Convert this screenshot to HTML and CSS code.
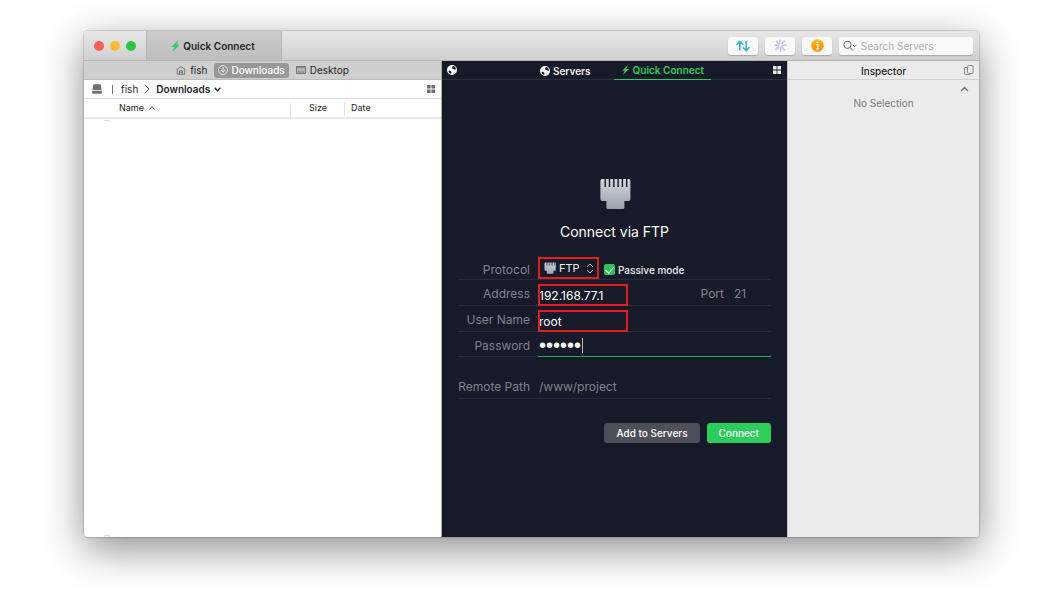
FILE: index.html
```html
<!DOCTYPE html>
<html lang="en">
<head>
<meta charset="utf-8">
<title>Quick Connect</title>
<link rel="stylesheet" href="styles.css">
</head>
<body>
<svg class="defs" aria-hidden="true">
  <defs>
    <linearGradient id="metal" x1="0" y1="0" x2="0" y2="1"><stop offset="0" stop-color="#d3d5d9"/><stop offset="1" stop-color="#98a2ab"/></linearGradient>
    <linearGradient id="amber" x1="0" y1="0" x2="0" y2="1"><stop offset="0" stop-color="#ffb800"/><stop offset="1" stop-color="#ff8a0c"/></linearGradient>
    <symbol id="bolt" viewBox="0 0 9 12"><path d="M7.600 0 .4 6.900h3L1.300 12 8.600 4.800H5.400z" fill="currentColor"/></symbol>
    <symbol id="plug" viewBox="0 0 32 32"><path d="M2.500 1h3v8h1.400V1h2.900v8h1.400V1h2.900v8h1.400V1h2.900v8h1.400V1h2.900v8h1.400V1h2.900v8h1.400V1h1.500q1.500 0 1.500 2v18q0 2-2 2h-4v6.500q0 1.500-1.500 1.500h-15q-1.500 0-1.500-1.500V23h-4q-2 0-2-2V3q0-2 2-2z" fill="url(#metal)"/></symbol>
    <symbol id="grid" viewBox="0 0 8 8"><path d="M0 0h3.600v3.600H0zM4.400 0H8v3.600H4.400zM0 4.400h3.600V8H0zM4.400 4.400H8V8H4.400z" fill="currentColor"/></symbol>
    <symbol id="globe" viewBox="0 0 10 10"><circle cx="5" cy="5" r="5" fill="#fff"/><path d="M5.300 1.300 7 1.100 8.600 2.700 8.900 4.400 7.700 4.800 6.900 3.900 5.700 4 5.200 3zM1.500 5.700 3.200 5.700 4.600 6.900 4.200 8.700 3.200 8.600 2 7.400z" fill="#171a28"/></symbol>
  </defs>
</svg>
<div class="window">
  <header class="titlebar">
    <div class="lights">
      <button class="light red" aria-label="Close"></button>
      <button class="light yellow" aria-label="Minimize"></button>
      <button class="light green" aria-label="Zoom"></button>
    </div>
    <div class="window-tab"><svg class="bolt"><use href="#bolt"/></svg>Quick Connect</div>
    <div class="tools">
      <button class="tool" aria-label="Transfers"><svg width="16" height="12" viewBox="0 0 16 12" fill="none" stroke="#31b2d2" stroke-width="1.600"><path d="M4.800 10.500V1.500M1.500 4.700l3.300-3.400 3.300 3.400M11.200 1v9.500M7.900 7.300l3.300 3.400 3.300-3.400"/></svg></button>
      <button class="tool" aria-label="Activity"><svg width="13" height="13" viewBox="0 0 14 14" fill="none" stroke="#cabff0" stroke-width="1.700" stroke-linecap="round"><path d="M6 5 6.500 1M8.200 5l3-2.700M9 7l4-.5M8.500 8.700l2.700 3M7 9v4M5.200 8.700l-3 2.500M5 7 1 6.700M5.200 5.300 2.700 2.500"/></svg></button>
      <button class="tool" aria-label="Info"><svg width="13" height="13" viewBox="0 0 13 13"><circle cx="6.500" cy="6.500" r="6.300" fill="url(#amber)"/><circle cx="6.500" cy="3.500" r="1" fill="#fff"/><path d="M5.200 5.700h1.500v3.800M5 9.800h3.200" fill="none" stroke="#fff" stroke-width="1.200"/></svg></button>
      <label class="search"><svg width="14" height="12" viewBox="0 0 14 12" fill="none" stroke="#6c6c6c"><circle cx="4.500" cy="4.800" r="3.600"/><path d="m7.200 7.600 2.600 2.900M10 5l1.700 1.400L13.500 5"/></svg><input type="search" placeholder="Search Servers" aria-label="Search Servers"></label>
    </div>
  </header>
  <main class="panes">
    <section class="files">
      <nav class="places">
        <a class="place" href="#fish"><svg width="10" height="9" viewBox="0 0 10 9" fill="none" stroke="#777"><path d="M.5 3.600 5 .7l4.500 2.900M1.300 3.500v4.800h7.400V3.500M3.500 8V4.800h3V8M3.500 6.300h3"/></svg>fish</a>
        <a class="place active" href="#downloads"><svg width="10" height="10" viewBox="0 0 10 10" fill="none" stroke="#e4e4e4"><circle cx="5" cy="5" r="4.500"/><path d="M5 2v5M3 5l2 2.200L7 5"/></svg>Downloads</a>
        <a class="place" href="#desktop"><svg width="10" height="8" viewBox="0 0 10 8"><path d="M.5.5h9v7h-9z" fill="#b4b4b4" stroke="#777"/><path d="M1 1.500h8" stroke="#888"/><path d="M2 6h1.500M4.200 6h1.500M6.500 6H8" stroke="#666"/></svg>Desktop</a>
      </nav>
      <div class="path">
        <svg width="10" height="10" viewBox="0 0 10 10"><path d="M2 .3h6q.7 0 .8.700L9.600 6.200H.4L1.200 1q.1-.7.800-.7zM.2 7h9.600v2q0 .7-.7.700H.9Q.2 9.700.2 9z" fill="#707070"/></svg>
        <span class="bar"></span>
        <span>fish</span>
        <svg width="6" height="10" viewBox="0 0 6 10" fill="none" stroke="#666"><path d="m1 1 4 4-4 4"/></svg>
        <button class="folder">Downloads<svg width="7" height="5" viewBox="0 0 7 5" fill="none" stroke="#222" stroke-width="1.300"><path d="m.7.8 2.800 3L6.300.8"/></svg></button>
        <button class="view-button" aria-label="View options"><svg class="grid"><use href="#grid"/></svg></button>
      </div>
      <table class="listing">
        <thead><tr><th class="col-name">Name <svg width="6" height="4" viewBox="0 0 6 4" fill="none" stroke="#666"><path d="m.5 3.500 2.500-3 2.500 3"/></svg></th><th class="col-size">Size</th><th>Date</th></tr></thead>
      </table>
      <div class="rows"><span class="row-edge"></span><span class="row-edge corner"></span></div>
    </section>
    <section class="remote">
      <nav class="tabs">
        <button class="tab-icon" aria-label="Servers menu"><svg class="globe"><use href="#globe"/></svg></button>
        <div class="tab-group">
          <a class="tab" href="#servers"><svg class="globe"><use href="#globe"/></svg>Servers</a>
          <a class="tab current" href="#quick"><svg class="bolt small"><use href="#bolt"/></svg>Quick Connect</a>
        </div>
        <button class="tab-icon" aria-label="View options"><svg class="grid"><use href="#grid"/></svg></button>
      </nav>
      <form class="connect">
        <svg class="plug"><use href="#plug"/></svg>
        <h1>Connect via FTP</h1>
        <div class="field first">
          <label for="protocol">Protocol</label>
          <div class="select marked"><svg class="plug-small"><use href="#plug"/></svg><select id="protocol"><option>FTP</option></select><svg class="stepper" width="8" height="11" viewBox="0 0 8 11" fill="none" stroke="#bbb"><path d="M1 4l3-3 3 3M1 7l3 3 3-3"/></svg></div>
          <label class="passive"><input type="checkbox" checked>Passive mode</label>
        </div>
        <div class="field">
          <label for="address">Address</label>
          <input class="marked text" id="address" type="text" value="192.168.77.1">
          <label class="port-label" for="port">Port</label>
          <input class="port" id="port" type="text" placeholder="21">
        </div>
        <div class="field">
          <label for="user">User Name</label>
          <input class="marked text" id="user" type="text" value="root">
        </div>
        <div class="field last">
          <label for="password">Password</label>
          <div class="focused"><input id="password" type="password" value="secret"><span class="caret"></span></div>
        </div>
        <div class="field remote-path">
          <label for="path">Remote Path</label>
          <input class="wide" id="path" type="text" placeholder="/www/project">
        </div>
        <div class="actions"><button type="button" class="secondary">Add to Servers</button><button type="button" class="primary">Connect</button></div>
      </form>
    </section>
    <aside class="inspector">
      <div class="inspector-head"><h2>Inspector</h2><button aria-label="Copy"><svg width="10" height="11" viewBox="0 0 10 11" fill="none" stroke="#888"><rect x="3.500" y=".5" width="5.500" height="8" rx="1"/><path d="M3 2.500H1.500q-1 0-1 1v5q0 1 1 1h4q1 0 1-1"/></svg></button></div>
      <button class="collapse" aria-label="Collapse"><svg width="9" height="6" viewBox="0 0 9 6" fill="none" stroke="#777" stroke-width="1.300"><path d="m1 5 3.500-3.500L8 5"/></svg></button>
      <p>No Selection</p>
    </aside>
  </main>
</div>
</body>
</html>
```
FILE: styles.css
```css
* { box-sizing: border-box; }
body {
  margin: 0;
  min-height: 100vh;
  padding: 31px 85px 60px 84px;
  display: flex;
  background: #fff;
  color: #242424;
  font: 10px/14px Inter, "Liberation Sans", sans-serif;
}
button, input, select { font: inherit; color: inherit; border: 0; padding: 0; margin: 0; background: none; min-width: 0; }
input:focus { outline: none; }
a { color: inherit; text-decoration: none; }
svg { display: block; flex: none; }
.defs { position: absolute; width: 0; height: 0; }
.window {
  flex: 1;
  display: flex;
  flex-direction: column;
  border-radius: 4px;
  overflow: hidden;
  box-shadow: 0 0 1px 1px rgba(0, 0, 0, .15), 0 12px 40px rgba(0, 0, 0, .45);
}
.titlebar {
  display: flex;
  height: 30px;
  border-bottom: 1px solid #b4b4b4;
  background: linear-gradient(#e7e7e7, #d0d0d0);
}
.lights { display: flex; align-items: center; gap: 6px; width: 62px; padding-left: 10px; }
.light { width: 10px; height: 10px; border-radius: 50%; }
.red { background: #ff5e57; }
.yellow { background: #febc2e; }
.green { background: #28c840; }
.window-tab {
  width: 136px;
  display: flex;
  align-items: center;
  justify-content: center;
  gap: 3px;
  padding-right: 2px;
  border: solid #b5b5b5;
  border-width: 0 1px;
  background: linear-gradient(#cbcbcb, #bebebe);
  font-weight: 600;
}
.bolt { width: 9px; height: 12px; color: #2bcd5b; }
.bolt.small { height: 10px; }
.tools { flex: 1; display: flex; align-items: center; justify-content: flex-end; gap: 7px; padding-right: 6px; }
.tool, .search {
  height: 18px;
  display: flex;
  align-items: center;
  justify-content: center;
  border-radius: 3px;
  background: #f9f9f9;
  box-shadow: 0 1px 1px rgba(0, 0, 0, .2);
}
.tool { width: 30px; }
.search { width: 134px; padding: 0 4px; gap: 4px; }
.search input { flex: 1; }
.search input::placeholder { color: #b2b2b2; opacity: 1; }

.panes { flex: 1; display: grid; grid-template-columns: 358fr 345fr 192fr; }
.files, .remote, .inspector { display: flex; flex-direction: column; min-width: 0; }
.files { background: #fff; border-right: 1px solid #aaa; }
.places {
  height: 19px;
  display: flex;
  align-items: center;
  justify-content: center;
  gap: 3px;
  background: #cfcfcf;
  border-bottom: 1px solid #bbb;
}
.place { height: 15px; display: flex; align-items: center; gap: 4px; padding: 0 4px; border-radius: 3px; }
.place.active { gap: 3px; background: #989898; color: #fff; font-weight: 500; }
.path { height: 19px; display: flex; align-items: center; gap: 6px; padding: 0 6px 0 8px; border-bottom: 1px solid #e3e3e3; }
.bar { width: 1px; height: 9px; margin: 0 2px 0 4px; background: #777; }
.folder { display: flex; align-items: center; gap: 4px; font-weight: 600; }
.view-button { margin-left: auto; color: #707070; }
.grid { width: 8px; height: 8px; }
.listing { width: 100%; border-collapse: collapse; table-layout: fixed; font-size: 9px; }
.listing thead { border-bottom: 2px solid #e8e8e8; }
.listing th { height: 19px; padding: 0 7px; font-weight: 400; text-align: left; }
.listing th + th { background: linear-gradient(#e3e3e3, #e3e3e3) 0 3px / 1px 14px no-repeat; }
.listing .col-name { width: 206px; padding-left: 35px; }
.listing .col-size { width: 54px; padding-left: 19px; }
.listing svg { display: inline-block; margin: 0 0 1px 2px; }
.rows { flex: 1; display: flex; flex-direction: column; justify-content: space-between; padding: 1px 0 0 20px; }
.row-edge { width: 6px; height: 1px; background: #ddd; }
.row-edge.corner { height: 2px; background: none; border: 1px solid #ddd; border-bottom: 0; border-radius: 1px; }

.remote { background: #171a28; color: #eee; }
.tabs { height: 19px; display: flex; justify-content: space-between; padding: 0 6px 0 5px; border-bottom: 1px solid #2b2e3b; }
.tab-icon { display: flex; align-items: center; color: #eee; }
.globe { width: 10px; height: 10px; }
.tab-group { display: flex; gap: 16px; padding-left: 14px; }
.tab { height: 19px; display: flex; align-items: center; gap: 3px; padding: 0 7px; font-weight: 600; }
.current { color: #2bcd5b; border-bottom: 1px solid #2bcd5b; }
.connect { flex: 1; display: flex; flex-direction: column; justify-content: center; padding: 4px 16px 0; }
.plug { width: 32px; height: 32px; align-self: center; }
h1 { margin: 12px 0; font-size: 14px; line-height: 20px; font-weight: 400; text-align: center; color: #fff; }
.field {
  height: 26px;
  display: flex;
  align-items: center;
  padding-top: 3px;
  border-bottom: 1px solid #282b38;
  font-size: 12px;
}
.field.first { padding-top: 6px; }
.field.last { height: 25px; }
.field > label:first-child { width: 72px; margin-right: 8px; text-align: right; color: #81838a; white-space: nowrap; }
.field input::placeholder { color: #81838a; opacity: 1; }
.marked { height: 22px; align-self: flex-end; outline: 2px solid #e81c20; outline-offset: -2px; }
.text { width: 90px; margin-bottom: -1px; padding-left: 1px; color: #fff; }
.select { position: relative; width: 61px; font-size: 11px; }
.select select { appearance: none; width: 100%; height: 22px; padding-left: 21px; }
.plug-small { position: absolute; left: 6px; top: 5px; width: 12px; height: 12px; }
.stepper { position: absolute; right: 5px; top: 6px; pointer-events: none; }
.passive { display: flex; align-items: center; gap: 3px; margin-left: 5px; font-size: 10px; font-weight: 500; }
.passive input {
  appearance: none;
  width: 11px;
  height: 11px;
  border-radius: 2px;
  background: #2bc458;
  display: grid;
  place-items: center;
}
.passive input::before { content: ""; width: 4px; height: 7px; margin-bottom: 2px; border: solid #fff; border-width: 0 1px 1px 0; transform: rotate(40deg); }
.port-label { margin-left: auto; color: #81838a; }
.port { width: 37px; margin-left: 10px; }
.focused {
  flex: 1;
  height: 22px;
  align-self: flex-end;
  display: flex;
  align-items: center;
  margin-bottom: -1px;
  border-bottom: 1px solid #22b04f;
}
.focused input { width: 44px; height: 20px; padding-left: 1px; color: #fff; font: 20px/20px "Liberation Sans", sans-serif; }
.caret { width: 1px; height: 15px; background: #bbb; }
.remote-path { margin-top: 16px; }
.wide { flex: 1; padding-left: 1px; }
.actions { display: flex; justify-content: flex-end; gap: 7px; margin-top: 24px; }
.actions button { height: 20px; padding: 0 12px; border-radius: 3px; font-weight: 500; color: #fff; }
.secondary { background: #4d4f59; }
.primary { background: #2bce59; }

.inspector { background: #ebebeb; border-left: 1px solid #c4c4c4; }
.inspector-head { position: relative; height: 19px; border-bottom: 1px solid #d2d2d2; }
.inspector-head h2 { margin: 0; font-size: 10px; line-height: 20px; font-weight: 500; text-align: center; }
.inspector-head button { position: absolute; right: 5px; top: 4px; }
.collapse { align-self: flex-end; margin: 6px 10px 0 0; }
.inspector p { margin: 4px 0; text-align: center; color: #7b7b7b; }
```
